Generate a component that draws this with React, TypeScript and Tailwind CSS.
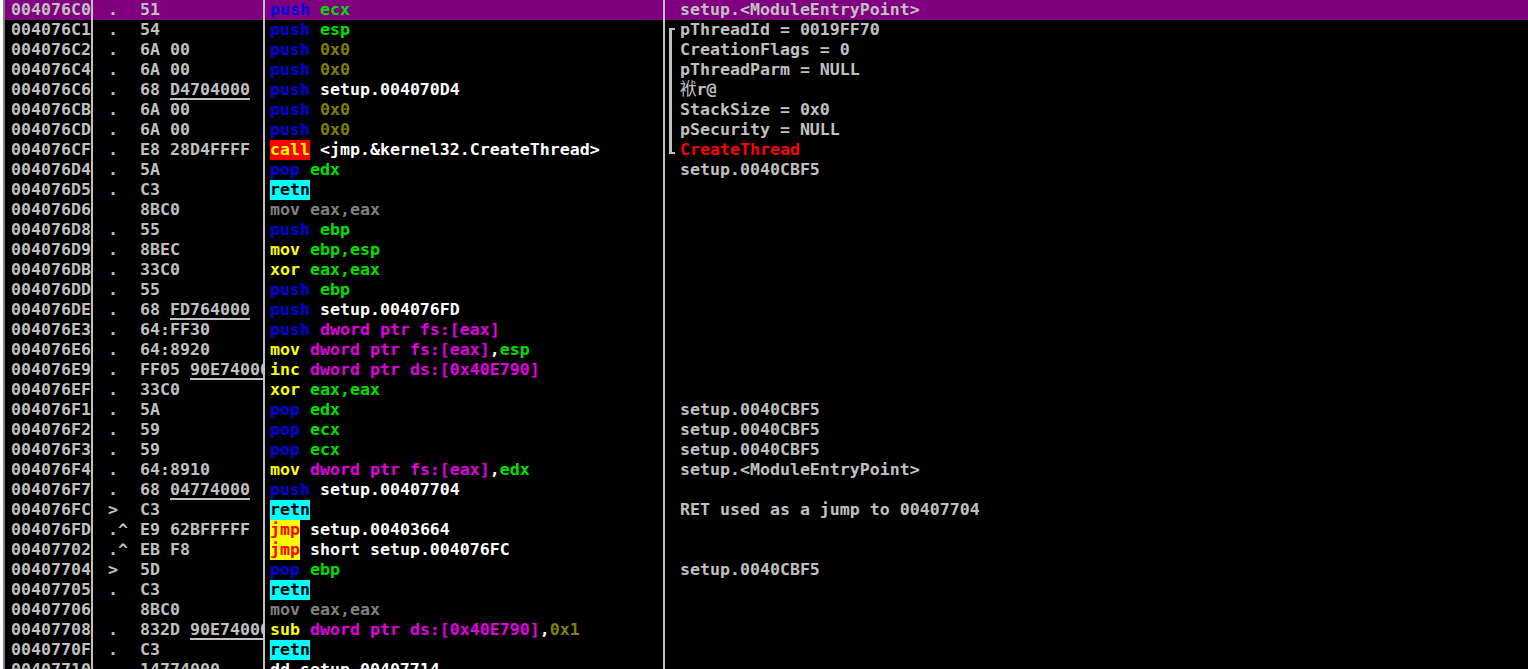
const G = "text-[#c0c0c0]";
type Seg = [string, string];
type Row = {
  a: string;
  m?: string;
  h: string;
  u?: string;
  d: Seg[];
  c?: string;
  cjk?: string;
  cc?: string;
  br?: "t" | "m" | "b";
};
const blue = "text-[#0000e0]";
const green = "text-[#00e000]";
const olive = "text-[#808000]";
const white = "text-white";
const pink = "text-[#e000e0]";
const gray = "text-[#808080]";
const yellow = "text-[#ffff00]";
const push = (...s: Seg[]): Seg[] => [["push", blue], [" ", ""], ...s];
const pop = (r: string): Seg[] => [["pop", blue], [" ", ""], [r, green]];
const zero = push(["0x0", olive]);
const cbf = "setup.0040CBF5";
const retn: Seg[] = [["retn", "bg-[#00ffff] text-black"]];
const jmp = (t: string): Seg[] => [["jmp", "bg-[#ffff00] text-[#ff0000]"], [" ", ""], [t, white]];
const mem: Seg = ["dword ptr fs:[eax]", pink];
const rows: Row[] = [
  { a: "004076C0", m: ".", h: "51", d: push(["ecx", green]), c: "setup.<ModuleEntryPoint>" },
  { a: "004076C1", m: ".", h: "54", d: push(["esp", green]), c: "pThreadId = 0019FF70", br: "t" },
  { a: "004076C2", m: ".", h: "6A 00", d: zero, c: "CreationFlags = 0", br: "m" },
  { a: "004076C4", m: ".", h: "6A 00", d: zero, c: "pThreadParm = NULL", br: "m" },
  { a: "004076C6", m: ".", h: "68 ", u: "D4704000", d: push(["setup.004070D4", white]), cjk: "袱", c: "r@", br: "m" },
  { a: "004076CB", m: ".", h: "6A 00", d: zero, c: "StackSize = 0x0", br: "m" },
  { a: "004076CD", m: ".", h: "6A 00", d: zero, c: "pSecurity = NULL", br: "m" },
  { a: "004076CF", m: ".", h: "E8 28D4FFFF", d: [["call", "bg-[#ff0000] text-[#ffff00]"], [" ", ""], ["<jmp.&kernel32.CreateThread>", white]], c: "CreateThread", cc: "text-[#ff0000]", br: "b" },
  { a: "004076D4", m: ".", h: "5A", d: pop("edx"), c: cbf },
  { a: "004076D5", m: ".", h: "C3", d: retn },
  { a: "004076D6", h: "8BC0", d: [["mov eax,eax", gray]] },
  { a: "004076D8", m: ".", h: "55", d: push(["ebp", green]) },
  { a: "004076D9", m: ".", h: "8BEC", d: [["mov", yellow], [" ", ""], ["ebp,esp", green]] },
  { a: "004076DB", m: ".", h: "33C0", d: [["xor", yellow], [" ", ""], ["eax,eax", green]] },
  { a: "004076DD", m: ".", h: "55", d: push(["ebp", green]) },
  { a: "004076DE", m: ".", h: "68 ", u: "FD764000", d: push(["setup.004076FD", white]) },
  { a: "004076E3", m: ".", h: "64:FF30", d: push(mem) },
  { a: "004076E6", m: ".", h: "64:8920", d: [["mov", yellow], [" ", ""], mem, [",", white], ["esp", green]] },
  { a: "004076E9", m: ".", h: "FF05 ", u: "90E74000", d: [["inc", yellow], [" ", ""], ["dword ptr ds:[0x40E790]", pink]] },
  { a: "004076EF", m: ".", h: "33C0", d: [["xor", yellow], [" ", ""], ["eax,eax", green]] },
  { a: "004076F1", m: ".", h: "5A", d: pop("edx"), c: cbf },
  { a: "004076F2", m: ".", h: "59", d: pop("ecx"), c: cbf },
  { a: "004076F3", m: ".", h: "59", d: pop("ecx"), c: cbf },
  { a: "004076F4", m: ".", h: "64:8910", d: [["mov", yellow], [" ", ""], mem, [",", white], ["edx", green]], c: "setup.<ModuleEntryPoint>" },
  { a: "004076F7", m: ".", h: "68 ", u: "04774000", d: push(["setup.00407704", white]) },
  { a: "004076FC", m: ">", h: "C3", d: retn, c: "RET used as a jump to 00407704" },
  { a: "004076FD", m: ".^", h: "E9 62BFFFFF", d: jmp("setup.00403664") },
  { a: "00407702", m: ".^", h: "EB F8", d: jmp("short setup.004076FC") },
  { a: "00407704", m: ">", h: "5D", d: pop("ebp"), c: cbf },
  { a: "00407705", m: ".", h: "C3", d: retn },
  { a: "00407706", h: "8BC0", d: [["mov eax,eax", gray]] },
  { a: "00407708", m: ".", h: "832D ", u: "90E74000", d: [["sub", yellow], [" ", ""], ["dword ptr ds:[0x40E790]", pink], [",", white], ["0x1", olive]] },
  { a: "0040770F", m: ".", h: "C3", d: retn },
  { a: "00407710", h: "14774000", d: [["dd setup.00407714", white]] },
];

function Bracket({ k }: { k?: Row["br"] }) {
  if (k === "t") return <div className="w-[6px] h-[12px] mt-[8px] ml-[4px] shrink-0 border-l-[3px] border-t-2 border-[#c0c0c0]" />;
  if (k === "m") return <div className="w-[6px] h-5 ml-[4px] shrink-0 border-l-[3px] border-[#c0c0c0]" />;
  if (k === "b") return <div className="w-[6px] h-[14px] ml-[4px] shrink-0 border-l-[3px] border-b-2 border-[#c0c0c0]" />;
  return <div className="w-[10px] shrink-0" />;
}

export default function App() {
  return (
    <div
      className="h-[669px] w-[1528px] overflow-hidden bg-black whitespace-pre text-[16.6px] leading-5 font-bold"
      style={{ fontFamily: '"DejaVu Sans Mono", "Noto Sans CJK SC", monospace' }}
    >
      {rows.map((r, i) => (
        <div key={i} className={`flex h-5 ${i === 0 ? "bg-[#800080]" : ""}`}>
          <div className="w-[3px] shrink-0 bg-white" />
          <div className="w-[2px] shrink-0 bg-[#808080]" />
          <div className={`w-[88px] shrink-0 pl-[6px] border-r-2 border-[#c0c0c0] ${G}`}>{r.a}</div>
          <div className={`w-[172px] shrink-0 overflow-hidden flex border-r-2 border-[#c0c0c0] ${G}`}>
            <div className="w-[47px] pl-[15px] shrink-0">{r.m ?? ""}</div>
            <div>{r.h}</div>
            {r.u && <div className="border-b-2 border-[#c0c0c0] h-5 shrink-0">{r.u}</div>}
          </div>
          <div className="w-[400px] shrink-0 pl-[5px] border-r-2 border-[#c0c0c0]">
            {r.d.map((s, j) => (
              <span key={j} className={`inline-block h-5 ${s[1]}`}>{s[0]}</span>
            ))}
          </div>
          <Bracket k={r.br} />
          <div className={`pl-[5px] ${r.cc ?? G}`}>
            {r.cjk && <span className="font-normal">{r.cjk}</span>}
            {r.c}
          </div>
        </div>
      ))}
    </div>
  );
}
